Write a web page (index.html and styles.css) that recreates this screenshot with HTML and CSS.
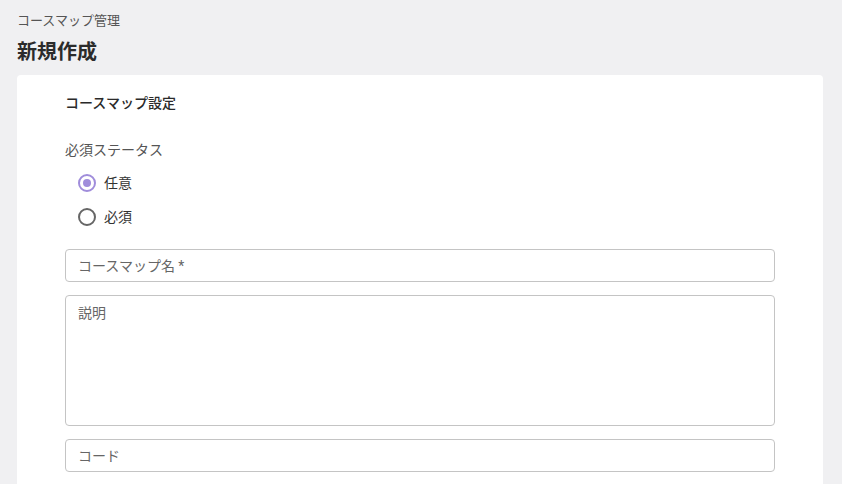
FILE: index.html
```html
<!DOCTYPE html>
<html lang="ja">
<head>
    <meta charset="utf-8">
    <title>新規作成 | コースマップ管理</title>
    <link rel="stylesheet" href="styles.css">
</head>
<body>
    <div class="page">
        <div class="breadcrumb">コースマップ管理</div>
        <h1 class="page-title">新規作成</h1>
        <div class="card">
            <h2 class="section-title">コースマップ設定</h2>
            <form class="form">
                <div class="field-label">必須ステータス</div>
                <div class="radio-group">
                    <label class="radio">
                        <input type="radio" name="required" value="optional" checked>
                        <span class="radio-mark"></span>
                        <span class="radio-text">任意</span>
                    </label>
                    <label class="radio">
                        <input type="radio" name="required" value="required">
                        <span class="radio-mark"></span>
                        <span class="radio-text">必須</span>
                    </label>
                </div>
                <input class="text-input" placeholder="コースマップ名 *">
                <textarea class="text-input text-area" placeholder="説明"></textarea>
                <input class="text-input" placeholder="コード">
            </form>
        </div>
    </div>
</body>
</html>
```

FILE: styles.css
```css
html {
    color: #333333;
    font-family: Roboto, "Noto Sans CJK JP", sans-serif;
    font-size: 14px;
}

body {
    margin: 0;
    background: #f0f0f2;
}

input,
textarea {
    font-family: inherit;
    font-size: inherit;
    color: inherit;
}

.page {
    padding: 11px 17px 0 17px;
    width: 806px;
}

.breadcrumb {
    font-size: 13px;
    line-height: 20px;
    color: #555555;
}

.page-title {
    margin: 7px 0 9px;
    font-size: 20px;
    line-height: 28px;
    font-weight: 700;
    color: #2b2b2b;
}

.card {
    background: white;
    border-radius: 4px;
    padding: 18px 48px 24px;
}

.section-title {
    margin: 0;
    font-size: 14px;
    line-height: 20px;
    font-weight: 500;
    color: #2a2a2a;
}

.form {
    display: flex;
    flex-direction: column;
    gap: 13px;
    margin-top: 27px;
}

.field-label {
    line-height: 20px;
    color: #555555;
}

.radio-group {
    display: flex;
    flex-direction: column;
    margin: -7px 0 2px;
}

.radio {
    display: flex;
    align-items: center;
    height: 34px;
    padding-left: 13px;
    cursor: pointer;
}

.radio input {
    /* hide the native control, the mark below draws it */
    position: absolute;
    opacity: 0;
    width: 0;
    height: 0;
}

.radio-mark {
    box-sizing: border-box;
    display: flex;
    justify-content: center;
    align-items: center;
    width: 18px;
    height: 18px;
    border: 2px solid #666666;
    border-radius: 50%;
}

.radio input:checked + .radio-mark {
    border-color: #a08ddb;
}

.radio input:checked + .radio-mark::after {
    content: "";
    width: 8px;
    height: 8px;
    border-radius: 50%;
    background: #a08ddb;
}

.radio-text {
    margin-left: 8px;
    line-height: 20px;
    color: #333333;
}

.text-input {
    box-sizing: border-box;
    width: 100%;
    height: 33px;
    margin: 0;
    padding: 0 12px;
    border: 1px solid #c4c4c4;
    border-radius: 4px;
    outline: none;
    background: white;
}

.text-input::placeholder {
    color: #666666;
}

.text-area {
    height: 131px;
    padding: 7px 12px;
    line-height: 20px;
    resize: none;
}
```
